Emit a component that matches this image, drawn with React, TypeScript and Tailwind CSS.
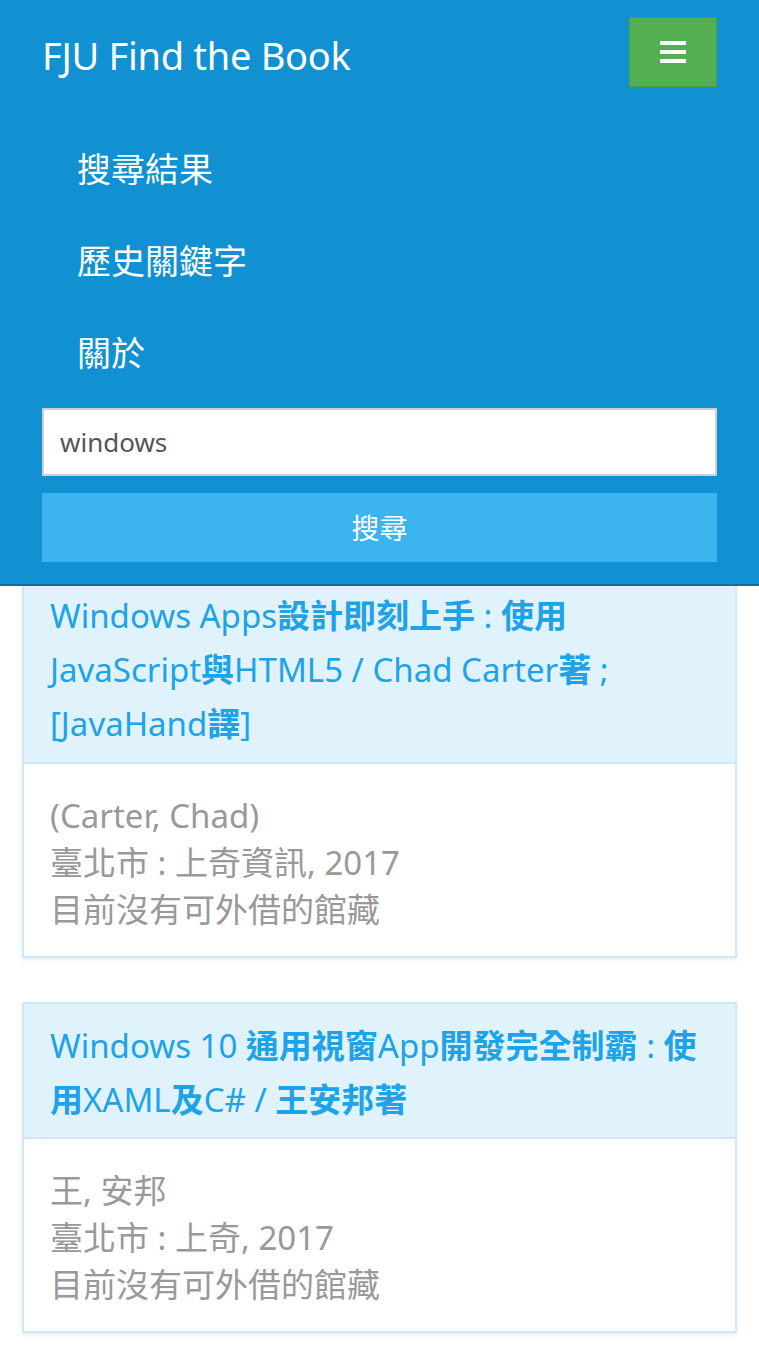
import React from "react";

const books = [
  {
    title: "Windows Apps設計即刻上手 : 使用JavaScript與HTML5 / Chad Carter著 ; [JavaHand譯]",
    author: "(Carter, Chad)",
    publisher: "臺北市 : 上奇資訊, 2017",
    status: "目前沒有可外借的館藏",
  },
  {
    title: "Windows 10 通用視窗App開發完全制霸 : 使用XAML及C# / 王安邦著",
    author: "王, 安邦",
    publisher: "臺北市 : 上奇, 2017",
    status: "目前沒有可外借的館藏",
  },
];

const navItems = ["搜尋結果", "歷史關鍵字", "關於"];

// CJK parts of the title are bold, latin parts stay regular
function Title({ text }: { text: string }) {
  const parts = text.split(/([\u3000-\u9fff\uff00-\uffef]+)/);
  return (
    <h2 className="text-[#1ea2e8] text-[33px] leading-[54px] font-normal">
      {parts.map((p, i) =>
        /[\u3000-\u9fff\uff00-\uffef]/.test(p) ? (
          <span key={i} className="font-bold">
            {p}
          </span>
        ) : (
          <span key={i}>{p}</span>
        )
      )}
    </h2>
  );
}

function App() {
  return (
    <div
      className="min-h-screen bg-white"
      style={{ fontFamily: '"Noto Sans", "Noto Sans CJK TC", sans-serif' }}
    >
      <header className="bg-[#1190d2] px-[42px] pb-[22px] border-b-2 border-[#0b6fa3]">
        <div className="h-[104px] flex items-start justify-between pt-[17px]">
          <h1 className="text-white text-[38px] leading-[70px] mt-[3px] tracking-[-0.3px]">FJU Find the Book</h1>
          <button className="w-[88px] h-[70px] bg-[#53af51] border border-[#4aa046] flex flex-col items-center justify-center gap-[5px]">
            <span className="block w-[26px] h-[4px] bg-white" />
            <span className="block w-[26px] h-[4px] bg-white" />
            <span className="block w-[26px] h-[4px] bg-white" />
          </button>
        </div>

        <nav className="mt-[19px]">
          {navItems.map((item) => (
            <div key={item} className="h-[92px] flex items-center pl-[35px] text-white text-[34px]">
              {item}
            </div>
          ))}
        </nav>

        <div className="mt-[9px] h-[68px] bg-white border-2 border-[#cfcfcf] flex items-center pl-[16px] text-[26px] text-[#555]">
          windows
        </div>
        <button className="mt-[17px] w-full h-[69px] bg-[#3bb4f0] text-white text-[28px] flex items-center justify-center">
          搜尋
        </button>
      </header>

      <main className="px-[22px] flex flex-col gap-[44px]">
        {books.map((book, i) => (
          <div
            key={i}
            className={
              i === 0
                ? "border-2 border-t-0 border-[#cbe9fa] shadow-[0_2px_4px_rgba(0,0,0,0.08)]"
                : "border-2 border-[#cbe9fa] shadow-[0_2px_4px_rgba(0,0,0,0.08)]"
            }
          >
            <div
              className={
                i === 0
                  ? "bg-[#e0f3fd] pt-[3px] pb-[11px] px-[26px] border-b-2 border-[#cbe9fa]"
                  : "bg-[#e0f3fd] pt-[15px] pb-[10px] px-[26px] border-b-2 border-[#cbe9fa]"
              }
            >
              <Title text={book.title} />
            </div>
            <div className="bg-white pt-[28px] pb-[23px] px-[26px] text-[#999] text-[33px] leading-[47px]">
              <p>{book.author}</p>
              <p>{book.publisher}</p>
              <p>{book.status}</p>
            </div>
          </div>
        ))}
      </main>
    </div>
  );
}

export default App;
